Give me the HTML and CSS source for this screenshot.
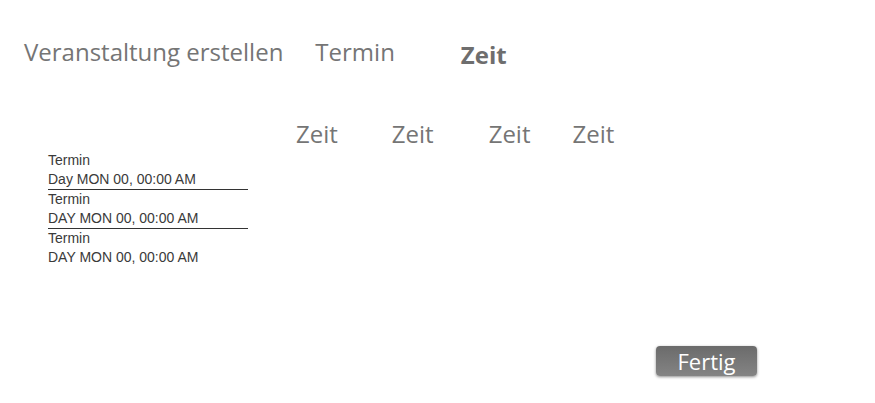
FILE: index.html
```html
<!DOCTYPE html>
<html lang="de">
<head>
<meta charset="utf-8">
<title>Zeit</title>
<link rel="stylesheet" href="styles.css">
</head>
<body>
<div class="page">
  <nav class="steps">
    <span class="step step-first">Veranstaltung erstellen</span>
    <span class="step step-second">Termin</span>
    <span class="step step-active">Zeit</span>
  </nav>
  <div class="times">
    <span class="time t1">Zeit</span>
    <span class="time t2">Zeit</span>
    <span class="time t3">Zeit</span>
    <span class="time t4">Zeit</span>
  </div>
  <ul class="dates">
    <li class="date"><div>Termin</div><div>Day MON 00, 00:00 AM</div></li>
    <li class="date"><div>Termin</div><div>DAY MON 00, 00:00 AM</div></li>
    <li class="date"><div>Termin</div><div>DAY MON 00, 00:00 AM</div></li>
  </ul>
  <div class="actions">
    <button class="done">Fertig</button>
  </div>
</div>
</body>
</html>
```
FILE: styles.css
```css
html, body {
  margin: 0;
  padding: 0;
  background: #fff;
}
.page {
  width: 875px;
  height: 403px;
  font-family: "Open Sans", sans-serif;
  color: #757575;
}
.steps {
  display: flex;
  align-items: flex-start;
  padding: 37px 0 0 24px;
  height: 50px;
  box-sizing: content-box;
}
.step {
  font-size: 24px;
  line-height: 30px;
}
.step-second {
  margin-left: 32px;
}
.step-active {
  margin-left: 66px;
  font-weight: 700;
  font-size: 24px;
  margin-top: 3px;
  color: #6e6e6e;
}
.times {
  display: flex;
  padding-left: 296px;
  margin-top: 32px;
  height: 30px;
}
.time {
  font-size: 24px;
  line-height: 30px;
}
.t2 { margin-left: 54px; }
.t3 { margin-left: 55px; }
.t4 { margin-left: 42px; }
.dates {
  list-style: none;
  margin: 0;
  padding: 2px 0 0 48px;
  width: 200px;
  font-family: "Liberation Sans", Arial, sans-serif;
  font-size: 14px;
  color: #3a3a3a;
}
.date {
  line-height: 19px;
  border-bottom: 1px solid #333;
}
.date:last-child {
  border-bottom: none;
}
.actions {
  display: flex;
  justify-content: flex-start;
  padding-left: 656px;
  margin-top: 79px;
}
.done {
  width: 101px;
  height: 30px;
  padding: 0;
  border: none;
  border-radius: 4px;
  background: linear-gradient(#6b6b6b, #848484);
  box-shadow: 0 1px 3px rgba(0,0,0,0.45);
  color: #fff;
  font-family: "Open Sans", sans-serif;
  font-size: 22px;
  line-height: 30px;
}
```
